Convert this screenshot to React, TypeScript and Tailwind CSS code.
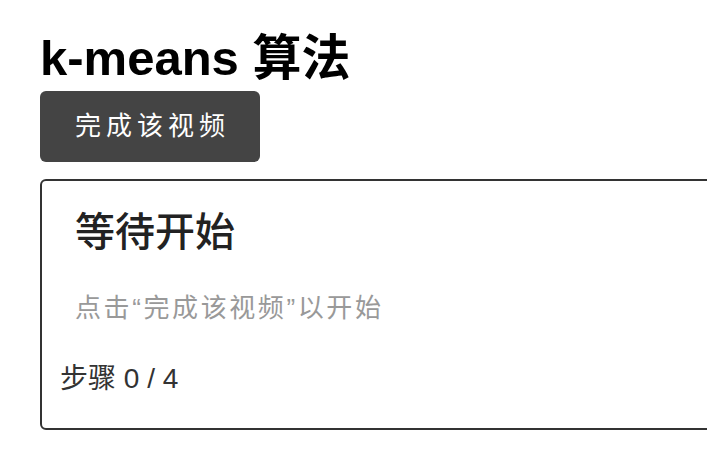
const font = { fontFamily: '"Liberation Sans", "Noto Sans CJK SC", sans-serif' }

const App = () => {
    return (
        <div className="w-screen h-screen overflow-hidden bg-white pl-[40px] pt-[30px]" style={font}>
            <h1 className="text-[49px] leading-[56px] font-bold text-black">k-means 算法</h1>
            <button className="mt-[5px] w-[220px] h-[71px] pl-[5px] rounded-[6px] bg-[#444444] text-white text-[26px] tracking-[5px] flex items-center justify-center">
                完成该视频
            </button>
            <div className="mt-[17px] w-[800px] h-[251px] rounded-[6px] border-2 border-[#333333] pt-[28px] px-[18px]">
                <div className="pl-[15px]">
                    <h2 className="text-[40px] leading-[47px] font-medium text-[#222222]">等待开始</h2>
                    <p className="mt-[38px] text-[26px] leading-[29px] tracking-[2.6px] text-[#999999]">点击“完成该视频”以开始</p>
                </div>
                <div className="mt-[41px] text-[28px] leading-[29px] text-[#333333]">步骤 0 / 4</div>
            </div>
        </div>
    )
}

export default App
